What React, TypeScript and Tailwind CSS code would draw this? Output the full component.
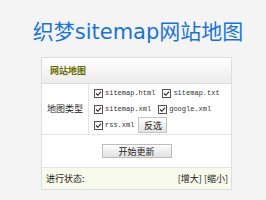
import React from "react";

const cjk = '"Noto Sans CJK SC", "Noto Sans", sans-serif';

function CheckBox() {
  return (
    <svg width="9" height="9" viewBox="0 0 9 9" className="shrink-0">
      <rect x="0.5" y="0.5" width="8" height="8" fill="#fff" stroke="#555" />
      <path d="M2 4.5 L3.8 6.3 L7 2.6" fill="none" stroke="#222" strokeWidth="1.1" />
    </svg>
  );
}

function Option({ label }: { label: string }) {
  return (
    <label className="flex items-center gap-[2px]">
      <CheckBox />
      <span className="text-[7px] text-[#333] leading-none font-['Liberation_Mono',monospace]">
        {label}
      </span>
    </label>
  );
}

export default function App() {
  return (
    <div className="w-[266px] h-[200px] bg-[#f4f4f4] overflow-hidden">
      <div className="ml-[41px] w-[191px] pt-[17px]">
        <h1
          className="text-[21px] leading-[30px] h-[40px] text-center whitespace-nowrap text-[#1a74d8] -mx-[12px] pl-[3px]"
          style={{ fontFamily: '"DejaVu Sans", "Noto Sans CJK SC", sans-serif' }}
        >
          织梦sitemap网站地图
        </h1>

        <div className="border border-[#dedede] bg-white" style={{ fontFamily: cjk }}>
          {/* header */}
          <div className="h-[26px] flex items-center pl-[8px] border-b border-[#dcdcdc] bg-gradient-to-b from-white to-[#ececec]">
            <span className="text-[9px] font-bold text-[#6b6b00]">网站地图</span>
          </div>

          {/* map type */}
          <div className="flex border-b border-[#e4e4e4]">
            <div className="w-[47px] flex items-center justify-center border-r border-[#e4e4e4] text-[9px] text-[#222]">
              地图类型
            </div>
            <div className="flex-1 pl-[5px] pt-[1px] pb-[1px]">
              <div className="h-[16px] flex items-center gap-[7px]">
                <Option label="sitemap.html" />
                <Option label="sitemap.txt" />
              </div>
              <div className="h-[16px] flex items-center gap-[7px]">
                <Option label="sitemap.xml" />
                <Option label="google.xml" />
              </div>
              <div className="h-[16px] flex items-center gap-[4px]">
                <Option label="rss.xml" />
                <button className="w-[29px] h-[16px] text-[9px] text-[#222] border border-[#c4c4c4] bg-gradient-to-b from-white to-[#e2e2e2] leading-none">
                  反选
                </button>
              </div>
            </div>
          </div>

          {/* start button */}
          <div className="h-[33px] flex items-center justify-center border-b border-[#e4e4e4]">
            <button className="w-[70px] h-[14px] text-[9px] text-[#222] border border-[#bdbdbd] bg-gradient-to-b from-white to-[#e0e0e0] leading-none">
              开始更新
            </button>
          </div>

          {/* status */}
          <div className="h-[21px] flex items-center justify-between pl-[4px] pr-[3px] bg-[#f8faeb] text-[9px] text-[#222]">
            <span>进行状态:</span>
            <span className="flex gap-[2px]">
              <span>[增大]</span>
              <span>[缩小]</span>
            </span>
          </div>
        </div>
      </div>
    </div>
  );
}
